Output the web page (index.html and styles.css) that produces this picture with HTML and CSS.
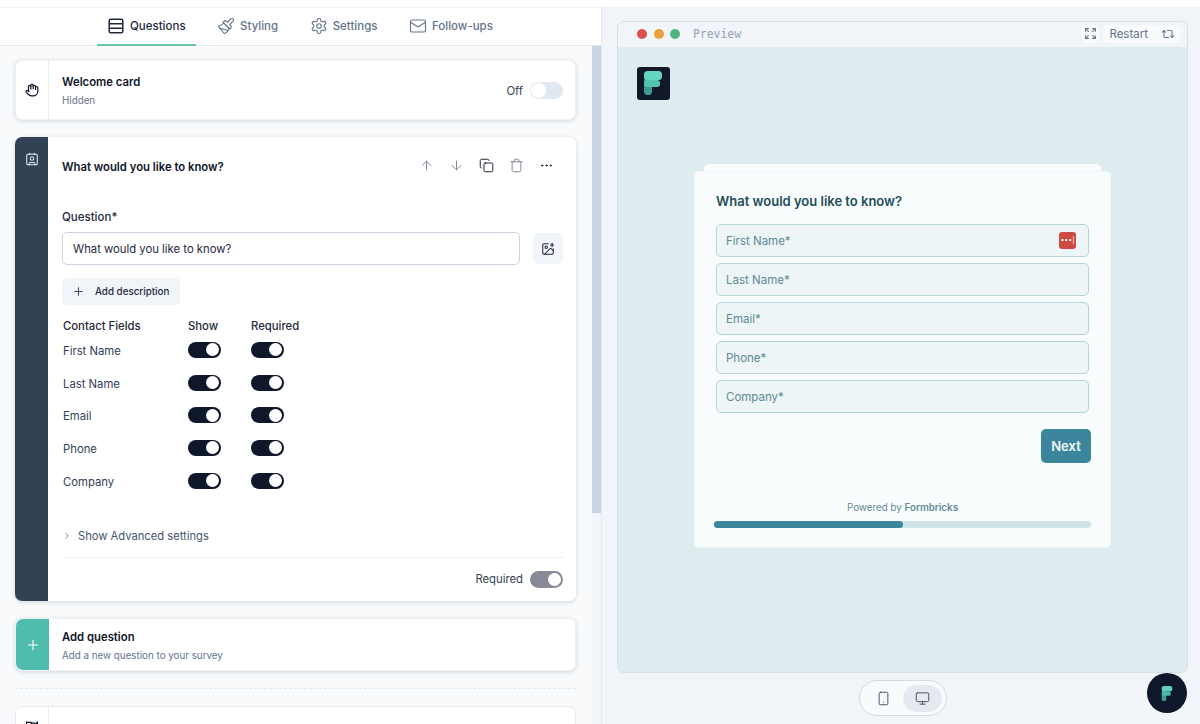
FILE: index.html
```html
<!DOCTYPE html>
<html lang="en">
<head>
    <meta charset="UTF-8">
    <meta name="viewport" content="width=device-width, initial-scale=1.0">
    <title>Survey editor</title>
    <link rel="stylesheet" href="styles.css">
</head>
<body>
<div class="page">

    <!-- left: editor -->
    <div class="editor">
        <nav class="tabs">
            <a class="tab active">
                <svg class="ico ico-tab" viewBox="0 0 24 24"><rect width="18" height="18" x="3" y="3" rx="2"/><path d="M21 9H3"/><path d="M21 15H3"/></svg>
                Questions
            </a>
            <a class="tab">
                <svg class="ico ico-tab" viewBox="0 0 24 24"><path d="m14.622 17.897-10.68-2.913"/><path d="M18.376 2.622a1 1 0 1 1 3.002 3.002L17.36 9.643a.5.5 0 0 0 0 .707l.944.944a2.41 2.41 0 0 1 0 3.408l-.944.944a.5.5 0 0 1-.707 0L8.354 7.348a.5.5 0 0 1 0-.707l.944-.944a2.41 2.41 0 0 1 3.408 0l.944.944a.5.5 0 0 0 .707 0z"/><path d="M9 8c-1.804 2.71-3.97 3.46-6.583 3.948a.507.507 0 0 0-.302.819l7.32 8.883a1 1 0 0 0 1.185.204C12.735 20.405 16 16.792 16 15"/></svg>
                Styling
            </a>
            <a class="tab">
                <svg class="ico ico-tab" viewBox="0 0 24 24"><path d="M12.22 2h-.44a2 2 0 0 0-2 2v.18a2 2 0 0 1-1 1.73l-.43.25a2 2 0 0 1-2 0l-.15-.08a2 2 0 0 0-2.73.73l-.22.38a2 2 0 0 0 .73 2.73l.15.1a2 2 0 0 1 1 1.72v.51a2 2 0 0 1-1 1.74l-.15.09a2 2 0 0 0-.73 2.73l.22.38a2 2 0 0 0 2.73.73l.15-.08a2 2 0 0 1 2 0l.43.25a2 2 0 0 1 1 1.73V20a2 2 0 0 0 2 2h.44a2 2 0 0 0 2-2v-.18a2 2 0 0 1 1-1.73l.43-.25a2 2 0 0 1 2 0l.15.08a2 2 0 0 0 2.73-.73l.22-.39a2 2 0 0 0-.73-2.73l-.15-.08a2 2 0 0 1-1-1.74v-.5a2 2 0 0 1 1-1.74l.15-.09a2 2 0 0 0 .73-2.73l-.22-.38a2 2 0 0 0-2.73-.73l-.15.08a2 2 0 0 1-2 0l-.43-.25a2 2 0 0 1-1-1.73V4a2 2 0 0 0-2-2z"/><circle cx="12" cy="12" r="3"/></svg>
                Settings
            </a>
            <a class="tab">
                <svg class="ico ico-tab" viewBox="0 0 24 24"><rect width="20" height="16" x="2" y="4" rx="2"/><path d="m22 7-8.97 5.7a1.94 1.94 0 0 1-2.06 0L2 7"/></svg>
                Follow-ups
            </a>
        </nav>

        <div class="scroll-wrap">
            <div class="cards">

                <div class="card welcome">
                    <div class="side side-plain">
                        <svg class="ico ico-side" viewBox="0 0 24 24"><path d="M18 11V6a2 2 0 0 0-2-2a2 2 0 0 0-2 2"/><path d="M14 10V4a2 2 0 0 0-2-2a2 2 0 0 0-2 2v2"/><path d="M10 10.5V6a2 2 0 0 0-2-2a2 2 0 0 0-2 2v8"/><path d="M18 8a2 2 0 1 1 4 0v6a8 8 0 0 1-8 8h-2c-2.8 0-4.5-.86-5.99-2.34l-3.6-3.6a2 2 0 0 1 2.83-2.82L7 15"/></svg>
                    </div>
                    <div class="card-main row-between">
                        <div>
                            <div class="card-title">Welcome card</div>
                            <div class="card-sub">Hidden</div>
                        </div>
                        <div class="switch-label">
                            Off
                            <span class="switch off"></span>
                        </div>
                    </div>
                </div>

                <div class="card question">
                    <div class="side side-dark">
                        <svg class="ico ico-contact" viewBox="0 0 24 24"><path d="M16 2v2"/><path d="M7 22v-2a2 2 0 0 1 2-2h6a2 2 0 0 1 2 2v2"/><path d="M8 2v2"/><circle cx="12" cy="11" r="3"/><rect x="3" y="4" width="18" height="18" rx="2"/></svg>
                    </div>
                    <div class="question-main">
                        <div class="question-head">
                            <div class="card-title">What would you like to know?</div>
                            <div class="actions">
                                <svg class="ico ico-act muted" viewBox="0 0 24 24"><path d="m5 12 7-7 7 7"/><path d="M12 19V5"/></svg>
                                <svg class="ico ico-act muted" viewBox="0 0 24 24"><path d="M12 5v14"/><path d="m19 12-7 7-7-7"/></svg>
                                <svg class="ico ico-act" viewBox="0 0 24 24"><rect width="14" height="14" x="8" y="8" rx="2"/><path d="M4 16c-1.1 0-2-.9-2-2V4c0-1.1.9-2 2-2h10c1.1 0 2 .9 2 2"/></svg>
                                <svg class="ico ico-act muted" viewBox="0 0 24 24"><path d="M3 6h18"/><path d="M19 6v14c0 1-1 2-2 2H7c-1 0-2-1-2-2V6"/><path d="M8 6V4c0-1 1-2 2-2h4c1 0 2 1 2 2v2"/></svg>
                                <svg class="ico ico-act" viewBox="0 0 24 24"><circle cx="12" cy="12" r="1"/><circle cx="19" cy="12" r="1"/><circle cx="5" cy="12" r="1"/></svg>
                            </div>
                        </div>

                        <div class="field-label">Question*</div>
                        <div class="input-row">
                            <div class="text-input">What would you like to know?</div>
                            <div class="image-btn">
                                <svg class="ico ico-img" viewBox="0 0 24 24"><path d="M16 5h6"/><path d="M19 2v6"/><path d="M21 11.5V19a2 2 0 0 1-2 2H5a2 2 0 0 1-2-2V5a2 2 0 0 1 2-2h7.5"/><path d="m21 15-3.086-3.086a2 2 0 0 0-2.828 0L6 21"/><circle cx="9" cy="9" r="2"/></svg>
                            </div>
                        </div>
                        <div class="add-desc">
                            <svg class="ico ico-plus" viewBox="0 0 24 24"><path d="M5 12h14"/><path d="M12 5v14"/></svg>
                            Add description
                        </div>

                        <div class="fields">
                            <div class="fields-head">Contact Fields</div>
                            <div class="fields-head">Show</div>
                            <div class="fields-head">Required</div>

                            <div>First Name</div><span class="switch on"></span><span class="switch on"></span>
                            <div>Last Name</div><span class="switch on"></span><span class="switch on"></span>
                            <div>Email</div><span class="switch on"></span><span class="switch on"></span>
                            <div>Phone</div><span class="switch on"></span><span class="switch on"></span>
                            <div>Company</div><span class="switch on"></span><span class="switch on"></span>
                        </div>

                        <div class="advanced">
                            <svg class="ico ico-chev" viewBox="0 0 24 24"><path d="m9 18 6-6-6-6"/></svg>
                            Show Advanced settings
                        </div>
                        <div class="question-foot">
                            <div class="switch-label">
                                Required
                                <span class="switch grey"></span>
                            </div>
                        </div>
                    </div>
                </div>

                <div class="card add-card">
                    <div class="side side-teal">
                        <svg class="ico ico-add" viewBox="0 0 24 24"><path d="M5 12h14"/><path d="M12 5v14"/></svg>
                    </div>
                    <div class="card-main">
                        <div class="card-title">Add question</div>
                        <div class="card-sub">Add a new question to your survey</div>
                    </div>
                </div>

                <div class="dash-line"></div>

                <div class="card next-card">
                    <div class="side side-plain side-top">
                        <svg class="ico ico-side" viewBox="0 0 24 24"><path d="m11 17 2 2a1 1 0 1 0 3-3"/><path d="m14 16 2.5 2.5a1 1 0 1 0 3-3l-3.88-3.88a3 3 0 0 0-4.24 0l-.88.88a1 1 0 1 1-3-3l2.81-2.81a5.79 5.79 0 0 1 7.06-.87l.47.28a2 2 0 0 0 1.42.25L21 4"/><path d="m21 3 1 11h-2"/><path d="M3 3 2 14l6.5 6.5a1 1 0 1 0 3-3"/><path d="M3 4h8"/></svg>
                    </div>
                    <div class="card-main"></div>
                </div>
            </div>
            <div class="scrollbar"><div class="thumb"></div></div>
        </div>
    </div>

    <!-- right: preview -->
    <div class="preview">
        <div class="window">
            <div class="window-head">
                <div class="dots">
                    <span class="dot red"></span>
                    <span class="dot amber"></span>
                    <span class="dot green"></span>
                </div>
                <div class="preview-word">Preview</div>
                <div class="window-tools">
                    <span class="tool-btn square">
                        <svg class="ico ico-expand" viewBox="0 0 24 24"><path d="M3 8V3h5"/><path d="M16 3h5v5"/><path d="M21 16v5h-5"/><path d="M8 21H3v-5"/><path d="m3 3 5 5"/><path d="m21 3-5 5"/><path d="m21 21-5-5"/><path d="m3 21 5-5"/></svg>
                    </span>
                    <span class="tool-btn restart">
                        Restart
                        <svg class="ico ico-tool" viewBox="0 0 24 24"><path d="m2 9 3-3 3 3"/><path d="M13 18H7a2 2 0 0 1-2-2V6"/><path d="m22 15-3 3-3-3"/><path d="M11 6h6a2 2 0 0 1 2 2v10"/></svg>
                    </span>
                </div>
            </div>
            <div class="window-body">
                <svg class="logo" viewBox="0 0 33 33">
                    <rect width="33" height="33" rx="3" fill="#111827"/>
                    <rect x="7" y="10" width="8" height="18" rx="3.5" fill="#3a9c94"/>
                    <rect x="7" y="13" width="16" height="7" rx="3" fill="#52c4b2"/>
                    <rect x="7" y="4" width="18" height="9" rx="3.5" fill="#62d6c0"/>
                </svg>
                <div class="survey">
                    <h2 class="survey-title">What would you like to know?</h2>
                    <div class="survey-inputs">
                        <div class="survey-input">First Name*<span class="pw-badge">•••|</span></div>
                        <div class="survey-input">Last Name*</div>
                        <div class="survey-input">Email*</div>
                        <div class="survey-input">Phone*</div>
                        <div class="survey-input">Company*</div>
                    </div>
                    <div class="next-row"><span class="next-btn">Next</span></div>
                    <div class="powered">Powered by <b>Formbricks</b></div>
                    <div class="progress"><div class="progress-fill" style="width:50%"></div></div>
                </div>
            </div>
        </div>
        <div class="device-row">
            <div class="device-toggle">
                <span class="device">
                    <svg class="ico ico-device" viewBox="0 0 24 24"><rect width="14" height="20" x="5" y="2" rx="2"/><path d="M12 18h.01"/></svg>
                </span>
                <span class="device current">
                    <svg class="ico ico-device" viewBox="0 0 24 24"><rect width="20" height="14" x="2" y="3" rx="2"/><path d="M8 21h8"/><path d="M12 17v4"/></svg>
                </span>
            </div>
        </div>
        <div class="fab">
            <svg class="fab-logo" viewBox="0 0 16 20">
                <rect x="1" y="6" width="6" height="14" rx="2.5" fill="#3a9c94"/>
                <rect x="1" y="7" width="12" height="6" rx="2.5" fill="#4cb8a8"/>
                <rect x="1" y="0" width="14" height="7" rx="2.5" fill="#5fd0bd"/>
            </svg>
        </div>
    </div>
</div>
</body>
</html>
```

FILE: styles.css
```css
*{
    margin: 0;
    padding: 0;
    box-sizing: border-box;
}

html, body{
    height: 100%;
    overflow: hidden;
}

body{
    font-family: "Inter", "Liberation Sans", sans-serif;
    font-size: 12px;
    color: #0f172a;
    background-color: #fff;
}

.page{
    display: flex;
    height: 724px;
    padding-top: 7px;
}

.ico{
    fill: none;
    stroke: currentColor;
    stroke-width: 2;
    stroke-linecap: round;
    stroke-linejoin: round;
    flex-shrink: 0;
}

/* left side */
.editor{
    width: 602px;
    display: flex;
    flex-direction: column;
    background-color: #f8fafc;
    border-right: 1px solid #e2e8f0;
    border-top: 1px solid #eef1f5;
}

.tabs{
    height: 38px;
    display: flex;
    padding-left: 97px;
    background-color: #fff;
    border-bottom: 1px solid #e2e8f0;
}

.tab{
    display: flex;
    align-items: center;
    gap: 5px;
    padding: 0 10px;
    margin-bottom: -1px;
    color: #64748b;
    font-size: 11.5px;
    font-weight: 500;
    border-bottom: 2px solid transparent;
}

.tab + .tab{
    margin-left: 11.5px;
}

.tab.active{
    color: #1e293b;
    border-bottom-color: #6cc3ac;
}

.ico-tab{
    width: 18px;
    height: 18px;
    stroke-width: 1.5;
}

.tab.active .ico-tab{
    stroke-width: 2;
}

.scroll-wrap{
    flex: 1;
    display: flex;
    min-height: 0;
}

.cards{
    flex: 1;
    padding: 14px 16px 0 15px;
    min-width: 0;
    overflow: hidden;
}

.scrollbar{
    width: 9px;
    background-color: #f1f5f9;
}

.thumb{
    height: 467px;
    background-color: #cbd5e1;
}

.card{
    display: flex;
    background-color: #fff;
    border-radius: 7px;
    border: 1px solid #eef1f5;
    box-shadow: 0 1px 4px rgba(15, 23, 42, .16);
}

.welcome{
    height: 60px;
    margin-bottom: 17px;
}

.question{
    height: 464px;
    margin-bottom: 17px;
    border: 0;
}

.add-card{
    height: 53px;
    margin-bottom: 17px;
}

.add-card .card-main{
    padding-top: 11px;
}

.next-card{
    height: 60px;
    box-shadow: none;
    border-color: #e7ebf0;
}

.side{
    width: 33px;
    display: flex;
    justify-content: center;
    flex-shrink: 0;
    border-radius: 7px 0 0 7px;
}

.side-plain{
    align-items: center;
    color: #0f172a;
    border-right: 1px solid #e8ecf1;
}

.side-top{
    align-items: flex-start;
    padding-top: 13px;
}

.side-dark{
    background-color: #334155;
    color: #e2e8f0;
    padding-top: 15px;
}

.side-teal{
    align-items: center;
    background-color: #4fbdae;
    color: #fff;
}

.ico-side{
    width: 14px;
    height: 14px;
}

.ico-contact{
    width: 14px;
    height: 14px;
    stroke-width: 1.8;
}

.ico-add{
    width: 16px;
    height: 16px;
    stroke-width: 1.6;
}

.card-main{
    flex: 1;
    padding: 14px 12px 0 13px;
}

.row-between{
    display: flex;
    justify-content: space-between;
    align-items: flex-start;
}

.card-title{
    font-size: 11.3px;
    font-weight: 600;
    line-height: 15px;
    color: #0f172a;
}

.card-sub{
    margin-top: 4px;
    font-size: 9.8px;
    line-height: 14px;
    color: #64748b;
}

.switch-label{
    display: flex;
    align-items: center;
    gap: 7px;
    font-size: 11.3px;
    color: #334155;
}

.row-between .switch-label{
    margin-top: 7px;
}

.switch{
    display: flex;
    width: 33px;
    height: 17px;
    padding: 2px;
    border-radius: 9px;
}

.switch::after{
    content: "";
    display: block;
    width: 13px;
    height: 13px;
    border-radius: 50%;
    background-color: #fff;
}

.switch.on{
    height: 16px;
    margin-bottom: 2px;
    padding: 1.5px 2px;
    background-color: #0f172a;
    justify-content: flex-end;
}

.switch.off{
    background-color: #e2e8f0;
    padding: 1px;
}

.switch.off::after{
    width: 15px;
    height: 15px;
}

.switch.grey{
    background-color: #868a96;
    justify-content: flex-end;
}

.question-main{
    flex: 1;
    min-width: 0;
    padding: 0 13px 0 14px;
}

.question-head{
    height: 60px;
    display: flex;
    align-items: center;
    justify-content: space-between;
}

.actions{
    display: flex;
    align-items: center;
    gap: 15px;
    margin-bottom: 3px;
    padding-right: 9px;
    color: #0f172a;
}

.ico-act{
    width: 15px;
    height: 15px;
    stroke-width: 1.5;
}

.ico-act.muted{
    color: #7b8494;
}

.field-label{
    margin-top: 13px;
    font-size: 11.5px;
    font-weight: 500;
    line-height: 15px;
    color: #1e293b;
}

.input-row{
    display: flex;
    gap: 13px;
    margin-top: 7px;
}

.text-input{
    flex: 1;
    height: 33px;
    padding: 0 10px;
    line-height: 32px;
    font-size: 11.3px;
    color: #1e293b;
    background-color: #fff;
    border: 1px solid #cbd5e1;
    border-radius: 5px;
}

.image-btn{
    width: 30px;
    height: 31px;
    display: flex;
    align-items: center;
    justify-content: center;
    background-color: #f1f5f9;
    border-radius: 5px;
    color: #1e293b;
    margin-top: 1px;
}

.ico-img{
    width: 14px;
    height: 14px;
    stroke-width: 1.8;
}

.add-desc{
    display: flex;
    width: 118px;
    align-items: center;
    gap: 10px;
    height: 27px;
    margin-top: 13px;
    padding: 0 10px;
    font-size: 9.8px;
    font-weight: 500;
    color: #1e293b;
    background-color: #f1f5f9;
    border-radius: 5px;
}

.ico-plus{
    width: 13px;
    height: 13px;
    stroke-width: 1.6;
}

.fields{
    display: grid;
    grid-template-columns: 125px 63px 33px;
    grid-template-rows: 16.5px repeat(5, 32.7px);
    align-items: center;
    margin-top: 13px;
    padding-left: 1px;
    font-size: 11.3px;
    color: #334155;
}

.fields-head{
    font-weight: 500;
    color: #1e293b;
}

.advanced{
    display: flex;
    align-items: center;
    gap: 6px;
    height: 14px;
    margin-top: 31px;
    font-size: 11.2px;
    color: #475569;
}

.ico-chev{
    width: 10px;
    height: 10px;
    stroke-width: 1.6;
}

.question-foot{
    display: flex;
    justify-content: flex-end;
    margin-top: 14px;
    padding-top: 13px;
    border-top: 1px solid #eceff3;
}

.dash-line{
    border-top: 1px dashed #e2e8f0;
    margin-bottom: 17px;
}

/* right side */
.preview{
    flex: 1;
    position: relative;
    display: flex;
    flex-direction: column;
    padding: 13px 12px 0 15px;
    background-color: #f1f5f9;
    border-top: 1px solid #eef1f5;
    min-width: 0;
}

.window{
    height: 652px;
    display: flex;
    flex-direction: column;
    border: 1px solid #d6dee6;
    border-radius: 7px;
    overflow: hidden;
    background-color: #deecf0;
}

.window-head{
    height: 25px;
    display: flex;
    align-items: center;
    padding: 0 7px 2px 19px;
    background-color: #f1f5f9;
}

.dots{
    display: flex;
    gap: 6.5px;
    margin-right: 13px;
}

.dot{
    width: 10px;
    height: 10px;
    border-radius: 50%;
}

.red{
    background-color: #e04f4f;
}

.amber{
    background-color: #eba13c;
}

.green{
    background-color: #50b583;
}

.preview-word{
    font-family: "DejaVu Sans Mono", "Liberation Mono", monospace;
    font-size: 11.4px;
    color: #94a3b8;
}

.window-tools{
    margin-left: auto;
    display: flex;
    gap: 4px;
}

.tool-btn{
    height: 18px;
    display: flex;
    align-items: center;
    gap: 13px;
    font-size: 11.5px;
    color: #64748b;
    background-color: #f8fafc;
    border-radius: 5px;
}

.tool-btn.square{
    width: 18px;
    justify-content: center;
}

.tool-btn.restart{
    padding: 0 5px 0 6px;
}

.ico-tool{
    width: 14px;
    height: 14px;
    stroke-width: 1.8;
}

.ico-expand{
    width: 13px;
    height: 13px;
}

.window-body{
    flex: 1;
    padding: 20px 76px 0 19px;
}

.logo{
    display: block;
    width: 33px;
    height: 33px;
}

.survey{
    position: relative;
    width: 417px;
    height: 377px;
    margin: 71px 0 0 57px;
    padding: 21px 19px 0 21px;
    background-color: #f8fcfd;
    border-radius: 5px;
    border: 1px solid #f0f7f9;
}

/* the card stacked behind the survey */
.survey::before{
    content: "";
    position: absolute;
    left: 9px;
    right: 9px;
    top: -8px;
    height: 7px;
    background-color: #f8fcfd;
    border-radius: 5px 5px 0 0;
}

.survey-title{
    font-size: 13px;
    font-weight: 600;
    line-height: 16px;
    color: #1f4e5a;
}

.survey-inputs{
    display: flex;
    flex-direction: column;
    gap: 6px;
    margin-top: 15px;
    margin-right: 2px;
}

.survey-input{
    height: 33px;
    display: flex;
    align-items: center;
    justify-content: space-between;
    padding: 0 12px 0 9px;
    font-size: 11.5px;
    color: #5f8a92;
    background-color: #edf5f7;
    border: 1px solid #b5d3d8;
    border-radius: 5px;
}

.pw-badge{
    width: 17px;
    height: 17px;
    font-size: 7px;
    line-height: 17px;
    text-align: center;
    color: #fff;
    background-color: #cf4a42;
    border-radius: 3px;
}

.next-row{
    display: flex;
    justify-content: flex-end;
    margin-top: 16px;
}

.next-btn{
    width: 50px;
    height: 34px;
    line-height: 34px;
    text-align: center;
    font-size: 13px;
    font-weight: 600;
    color: #f4fafb;
    background-color: #3b869c;
    border-radius: 5px;
}

.powered{
    margin-top: 39px;
    margin-right: 2px;
    text-align: center;
    font-size: 9.8px;
    line-height: 12px;
    color: #668b94;
}

.powered b{
    font-weight: 600;
}

.progress{
    height: 7px;
    margin: 7px 0 0 -2px;
    background-color: #cfe4e9;
    border-radius: 4px;
}

.progress-fill{
    height: 100%;
    background-color: #3b869c;
    border-radius: 4px;
}

.device-row{
    display: flex;
    justify-content: center;
    margin-top: 7px;
}

.device-toggle{
    display: flex;
    align-items: center;
    width: 88px;
    height: 36px;
    padding: 3px 4px;
    background-color: #f8fafc;
    border: 1px solid #d5dae2;
    border-radius: 18px;
}

.device{
    flex: 1;
    height: 27px;
    display: flex;
    align-items: center;
    justify-content: center;
    color: #475569;
    border-radius: 14px;
}

.device.current{
    background-color: #e6eaf0;
}

.ico-device{
    width: 15px;
    height: 15px;
    stroke-width: 1.6;
}

.fab{
    position: absolute;
    right: 13px;
    top: 665px;
    width: 40px;
    height: 40px;
    display: flex;
    align-items: center;
    justify-content: center;
    background-color: #0f172a;
    border-radius: 50%;
}

.fab-logo{
    width: 12px;
    height: 15px;
}
```
